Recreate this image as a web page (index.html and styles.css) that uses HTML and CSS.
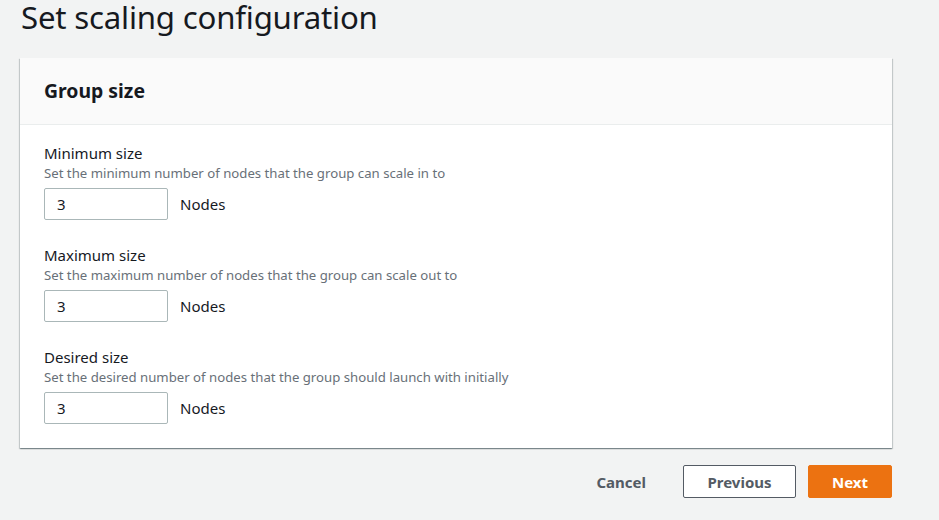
FILE: index.html
```html
<!DOCTYPE html>
<html lang="en">
<head>
<meta charset="utf-8">
<title>Set scaling configuration</title>
<link rel="stylesheet" href="styles.css">
</head>
<body>
<main class="page">
  <h1 class="page-title">Set scaling configuration</h1>
  <section class="card">
    <header class="card-header">
      <h2 class="card-title">Group size</h2>
    </header>
    <div class="card-body">
      <div class="field">
        <label class="field-label" for="min">Minimum size</label>
        <p class="field-desc">Set the minimum number of nodes that the group can scale in to</p>
        <div class="field-control">
          <input class="input" id="min" type="text" value="3">
          <span class="unit">Nodes</span>
        </div>
      </div>
      <div class="field">
        <label class="field-label" for="max">Maximum size</label>
        <p class="field-desc">Set the maximum number of nodes that the group can scale out to</p>
        <div class="field-control">
          <input class="input" id="max" type="text" value="3">
          <span class="unit">Nodes</span>
        </div>
      </div>
      <div class="field">
        <label class="field-label" for="des">Desired size</label>
        <p class="field-desc">Set the desired number of nodes that the group should launch with initially</p>
        <div class="field-control">
          <input class="input" id="des" type="text" value="3">
          <span class="unit">Nodes</span>
        </div>
      </div>
    </div>
  </section>
  <div class="actions">
    <button class="btn btn-link" type="button">Cancel</button>
    <button class="btn btn-normal" type="button">Previous</button>
    <button class="btn btn-primary" type="button">Next</button>
  </div>
</main>
</body>
</html>
```

FILE: styles.css
```css
html, body {
  margin: 0;
  padding: 0;
  background: #f2f3f3;
}
body {
  font-family: "Noto Sans", "Open Sans", sans-serif;
  color: #16191f;
}
.page {
  padding: 0 47px 0 20px;
}
.page-title {
  margin: 0 0 0 1px;
  font-size: 31.2px;
  font-weight: 400;
  line-height: 34px;
  color: #16191f;
  letter-spacing: -0.2px;
}
.card {
  margin-top: 24px;
  background: #ffffff;
  box-shadow: 0 1px 1px 0 rgba(0, 28, 36, 0.3), 1px 1px 1px 0 rgba(0, 28, 36, 0.15), -1px 1px 1px 0 rgba(0, 28, 36, 0.15);
}
.card-header {
  background: #fafafa;
  border-bottom: 1px solid #eaeded;
  padding: 0 24px;
  height: 66px;
  display: flex;
  align-items: center;
}
.card-title {
  margin: 0;
  font-size: 19.4px;
  font-weight: 700;
  line-height: 24px;
}
.card-body {
  padding: 17px 24px 24px;
  display: flex;
  flex-direction: column;
  gap: 24px;
}
.field {
  display: flex;
  flex-direction: column;
}
.field-label {
  font-size: 15px;
  line-height: 22px;
  color: #16191f;
}
.field-desc {
  margin: 0;
  font-size: 13.2px;
  line-height: 18px;
  color: #687078;
}
.field-control {
  margin-top: 6px;
  display: flex;
  align-items: center;
  gap: 12px;
}
.input {
  box-sizing: border-box;
  width: 124px;
  height: 32px;
  border: 1px solid #aab7b8;
  border-radius: 2px;
  padding: 0 12px;
  font-family: inherit;
  font-size: 15px;
  color: #16191f;
  background: #fff;
}
.unit {
  font-size: 15px;
  color: #16191f;
}
.actions {
  margin-top: 17px;
  display: flex;
  justify-content: flex-end;
  align-items: center;
  gap: 12px;
}
.btn {
  box-sizing: border-box;
  height: 33px;
  border-radius: 2px;
  font-family: inherit;
  font-size: 15px;
  font-weight: 700;
  padding: 0 20px;
  cursor: pointer;
}
.btn-link {
  background: transparent;
  border: 1px solid transparent;
  color: #545b64;
  margin-right: 4px;
}
.btn-normal {
  width: 113px;
  background: #fff;
  border: 1px solid #545b64;
  color: #545b64;
}
.btn-primary {
  width: 84px;
  background: #ec7211;
  border: 1px solid #ec7211;
  color: #fff;
}
```
